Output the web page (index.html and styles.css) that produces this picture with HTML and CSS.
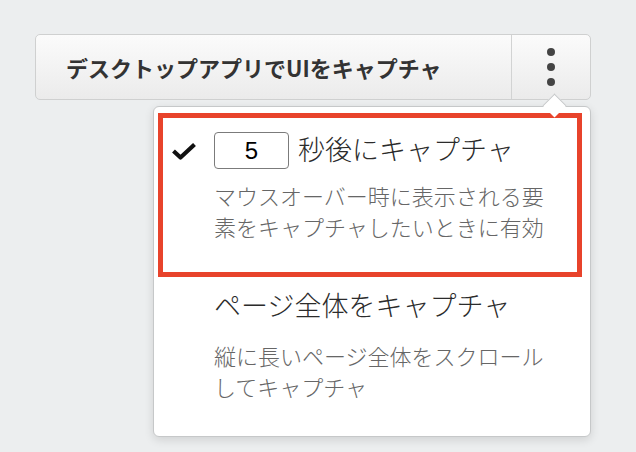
FILE: index.html
```html
<!DOCTYPE html>
<html lang="ja">
<head>
    <meta charset="UTF-8">
    <meta name="viewport" content="width=device-width, initial-scale=1.0">
    <title>キャプチャメニュー</title>
    <link rel="stylesheet" href="styles.css">
</head>
<body>

<div class="toolbar">
    <div class="split-button">
        <button type="button" class="main-btn">デスクトップアプリでUIをキャプチャ</button>
        <button type="button" class="more-btn" aria-label="その他">
            <span class="dot"></span>
            <span class="dot"></span>
            <span class="dot"></span>
        </button>
    </div>

    <div class="popover">
        <div class="menu-item highlighted">
            <svg class="check" width="26" height="18" viewBox="0 0 26 18">
                <polyline points="2.5,9 9.5,15.5 23.5,2.5" fill="none" stroke="#111" stroke-width="4.2" stroke-linejoin="round"/>
            </svg>
            <div class="item-title">
                <input type="text" class="delay" value="5">
                <span>秒後にキャプチャ</span>
            </div>
            <p class="item-desc">マウスオーバー時に表示される要素をキャプチャしたいときに有効</p>
        </div>

        <div class="menu-item">
            <span></span>
            <div class="item-title">
                <span>ページ全体をキャプチャ</span>
            </div>
            <p class="item-desc">縦に長いページ全体をスクロールしてキャプチャ</p>
        </div>
    </div>
</div>

</body>
</html>
```

FILE: styles.css
```css
body {
    font-family: "Noto Sans CJK JP", "Noto Sans", sans-serif;
    margin: 0;
    padding: 0;
    background-color: #eceeef;
}

.toolbar {
    position: relative;
    padding: 34px 0 0 35px;
    height: 418px;
}

.split-button {
    display: flex;
    width: 556px;
    height: 66px;
    box-sizing: border-box;
    border: 1px solid #cfd0d0;
    border-radius: 5px;
    background: linear-gradient(#fbfbfb, #ebebeb);
}

.main-btn {
    flex: 1;
    padding: 0 0 0 30px;
    border: none;
    background: none;
    text-align: left;
    font-family: inherit;
    font-size: 22px;
    font-weight: bold;
    color: #333;
}

.more-btn {
    width: 79px;
    border: none;
    border-left: 1px solid #d2d3d3;
    background: none;
    display: flex;
    flex-direction: column;
    align-items: center;
    justify-content: center;
    gap: 7px;
    padding: 0;
}

.dot {
    width: 8px;
    height: 8px;
    border-radius: 50%;
    background-color: #444;
}

.popover {
    position: absolute;
    left: 153px;
    top: 106px;
    width: 438px;
    height: 331px;
    box-sizing: border-box;
    background-color: #fff;
    border: 1px solid #c6c8c9;
    border-radius: 6px;
    box-shadow: 0 3px 10px rgba(0, 0, 0, 0.12);
}

.popover::before {
    content: "";
    position: absolute;
    left: 392px;
    top: -10px;
    width: 16px;
    height: 16px;
    background-color: #fff;
    border-top: 1px solid #c6c8c9;
    border-left: 1px solid #c6c8c9;
    transform: rotate(45deg);
}

.menu-item {
    display: grid;
    grid-template-columns: 43px 1fr;
    row-gap: 15px;
    align-items: center;
    margin: 0 8px 0 4px;
    padding: 6px 0 20px 8px;
    border: 5px solid transparent;
}

.menu-item.highlighted {
    margin-top: 6px;
    padding-top: 14px;
    padding-bottom: 30px;
    row-gap: 11px;
    border-color: #e8432b;
}

.item-title {
    display: flex;
    align-items: center;
    height: 37px;
    font-size: 27px;
    font-weight: 300;
    color: #2b2b2b;
}

.item-title span {
    line-height: 1;
    margin-top: -4px;
}

.delay {
    width: 75px;
    height: 37px;
    box-sizing: border-box;
    margin-right: 9px;
    border: 1.5px solid #7b7b7b;
    border-radius: 4px;
    text-align: center;
    font-family: "Liberation Sans", sans-serif;
    font-size: 24px;
    color: #000;
    padding: 0;
}

.item-desc {
    grid-column: 2;
    margin: 0;
    max-width: 340px;
    font-size: 22px;
    font-weight: 300;
    line-height: 31px;
    color: #666;
}
```
